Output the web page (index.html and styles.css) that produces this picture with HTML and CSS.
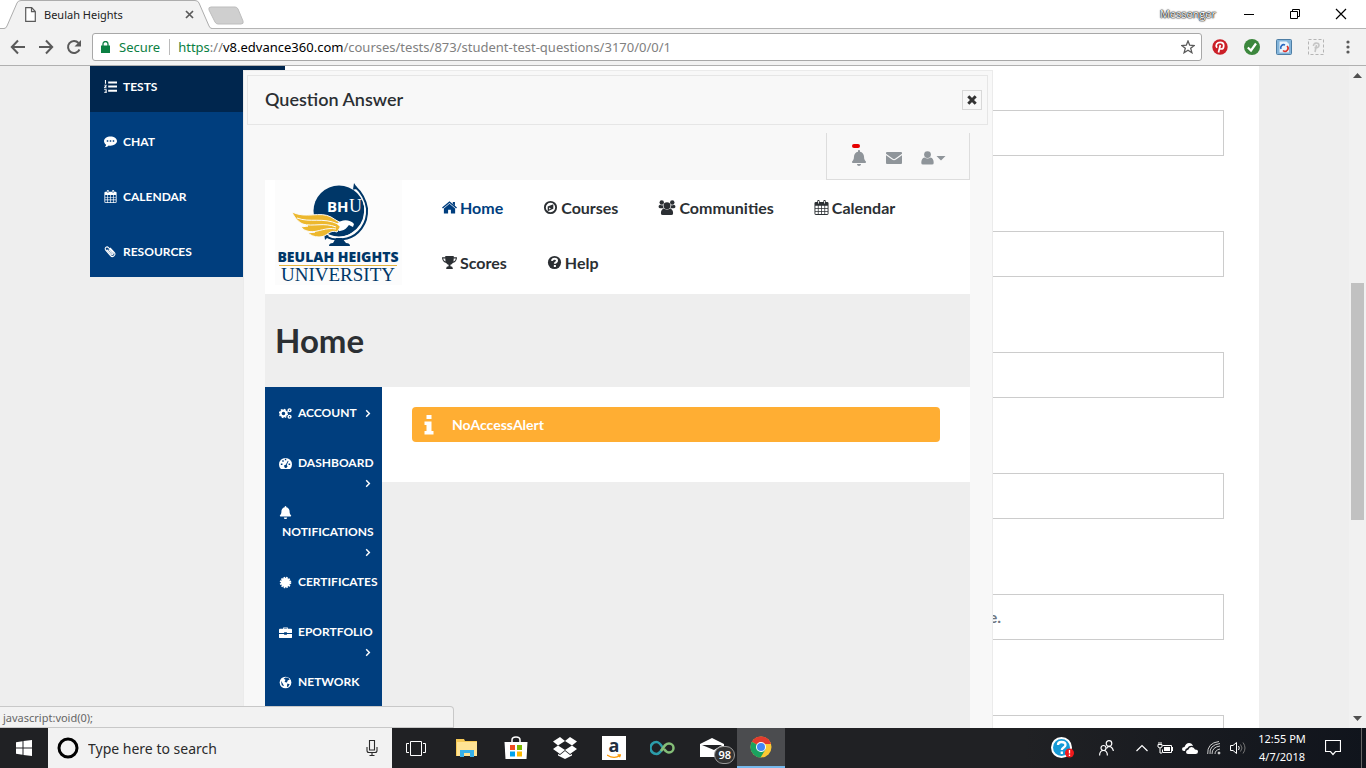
FILE: index.html
```html
<!DOCTYPE html>
<html lang="en">
<head>
    <meta charset="UTF-8">
    <meta name="viewport" content="width=device-width, initial-scale=1.0">
    <title>Beulah Heights</title>
    <link rel="stylesheet" href="styles.css">
</head>
<body>
    <!-- shared icons -->
    <svg class="sprite" aria-hidden="true">
        <symbol id="i-bell" viewBox="0 0 448 512"><path d="M224 512c35.32 0 63.97-28.65 63.97-64H160.03c0 35.35 28.65 64 63.97 64zm215.39-149.71c-19.32-20.76-55.47-51.99-55.47-154.29 0-77.7-54.48-139.9-127.94-155.16V32c0-17.67-14.32-32-31.98-32s-31.98 14.33-31.98 32v20.84C118.56 68.1 64.08 130.3 64.08 208c0 102.3-36.15 133.53-55.47 154.29-6 6.45-8.66 14.16-8.61 21.71.11 16.4 12.98 32 32.1 32h383.8c19.12 0 32-15.6 32.1-32 .05-7.55-2.61-15.27-8.61-21.71z"/></symbol>
        <symbol id="i-calendar" viewBox="0 0 16 16"><path fill-rule="evenodd" d="M2 2h1.500V1a1 1 0 0 1 1-1h.5a1 1 0 0 1 1 1v1h4V1a1 1 0 0 1 1-1h.5a1 1 0 0 1 1 1v1H14a1.500 1.500 0 0 1 1.500 1.500v11A1.500 1.500 0 0 1 14 16H2a1.500 1.500 0 0 1-1.500-1.500v-11A1.500 1.500 0 0 1 2 2zM4.400 1v2.800h.9V1zm6.300 0v2.800h.9V1zM1.500 6v2.500h2.600V6zm3.400 0v2.500h2.700V6zm3.500 0v2.500h2.700V6zm3.500 0v2.500h2.600V6zM1.500 9.300v2.400h2.600V9.300zm3.400 0v2.400h2.700V9.300zm3.500 0v2.400h2.700V9.300zm3.500 0v2.400h2.600V9.300zM1.500 12.500V15h2.600v-2.500zm3.400 0V15h2.700v-2.500zm3.500 0V15h2.700v-2.500zm3.500 0V15h2.600v-2.500z"/></symbol>
        <symbol id="i-chevron" viewBox="0 0 6 10"><path d="M1 1.500 4.500 5 1 8.500" fill="none" stroke="currentColor" stroke-width="1.600"/></symbol>
    </svg>

    <header class="tabstrip">
        <div class="tab">
            <svg class="tab-shape" viewBox="0 0 212 29" aria-hidden="true"><path d="M0 28.500H4Q6 28.500 7 26L17 3Q18 .5 21 .5H195Q198 .5 199 3L209 26Q210 28.500 212 28.500V29H0z" fill="#f2f2f2"/><path d="M0 28.500H4Q6 28.500 7 26L17 3Q18 .5 21 .5H195Q198 .5 199 3L209 26Q210 28.500 212 28.500" fill="none" stroke="#adadad"/></svg>
            <svg class="file-icon" width="11" height="15" viewBox="0 0 11 15" aria-hidden="true"><path d="M.7.7h6L10.300 4.500v9.800H.7zM6.500.7v4h3.800" fill="#fff" stroke="#5a5a5a" stroke-width="1.200"/></svg>
            <span class="tab-title">Beulah Heights</span>
            <button class="bare tab-close" aria-label="Close tab"><svg width="9" height="9" viewBox="0 0 9 9"><path d="M1 1l7 7M8 1L1 8" stroke="#5a5a5a" stroke-width="1.700"/></svg></button>
        </div>
        <button class="bare new-tab" aria-label="New tab"><svg width="36" height="19" viewBox="0 0 36 19"><path d="M3 1h24q2 0 3 2l5 12q1 3-2 3H10q-2 0-3-2L1 4Q0 1 3 1z" fill="#cfcfcf" stroke="#bdbdbd"/></svg></button>
        <div class="window-buttons">
            <span class="messenger">Messenger</span>
            <button class="bare" aria-label="Minimize"><svg width="12" height="12" viewBox="0 0 12 12"><path d="M1 6.500h10" stroke="#000"/></svg></button>
            <button class="bare" aria-label="Restore"><svg width="12" height="12" viewBox="0 0 12 12"><path d="M1.500 3.500h7v7h-7zM3.500 3V1.500h7v7H9" fill="none" stroke="#000"/></svg></button>
            <button class="bare" aria-label="Close"><svg width="12" height="12" viewBox="0 0 12 12"><path d="M1 1l10 10M11 1L1 11" stroke="#000" stroke-width="1.200"/></svg></button>
        </div>
    </header>

    <div class="toolbar">
        <div class="nav-buttons">
            <button class="bare" aria-label="Back"><svg width="16" height="16" viewBox="0 0 16 16"><path d="M15 8H2M8 1.500 1.800 8 8 14.500" fill="none" stroke="#5a5a5a" stroke-width="2"/></svg></button>
            <button class="bare" aria-label="Forward"><svg width="16" height="16" viewBox="0 0 16 16"><path d="M1 8h13M8 1.500 14.200 8 8 14.500" fill="none" stroke="#5a5a5a" stroke-width="2"/></svg></button>
            <button class="bare" aria-label="Reload"><svg width="16" height="16" viewBox="0 0 16 16"><path d="M13.500 10.500A6 6 0 1 1 12.500 4" fill="none" stroke="#5a5a5a" stroke-width="2"/><path d="M15 1v6.500H8.500z" fill="#5a5a5a"/></svg></button>
        </div>
        <div class="omnibox">
            <svg width="9" height="12" viewBox="0 0 9 12" aria-hidden="true"><path d="M0 4.500h9V12H0z" fill="#0b8043"/><path d="M2 5V3a2.500 2.500 0 0 1 5 0v2" fill="none" stroke="#0b8043" stroke-width="1.300"/></svg>
            <span class="secure">Secure</span>
            <div class="url" role="textbox" aria-label="Address"><span class="scheme">https</span>://<span class="host">v8.edvance360.com</span>/courses/tests/873/student-test-questions/3170/0/0/1</div>
            <button class="bare" aria-label="Bookmark"><svg width="14" height="14" viewBox="0 0 14 14"><path d="M7 1l1.700 4.200 4.500.3-3.500 2.800 1.200 4.400L7 10.200l-3.900 2.500 1.200-4.400L.8 5.500l4.500-.3z" fill="none" stroke="#5a5a5a" stroke-width="1.300"/></svg></button>
        </div>
        <div class="extensions">
            <button class="bare" aria-label="Pinterest"><svg width="16" height="16" viewBox="0 0 16 16"><circle cx="8" cy="8" r="7.700" fill="#cb1f27"/><path d="M6.500 13.500 8.300 6M5 8.800C3 6 5 3.300 8.200 3.300c5 0 4.200 6.700.8 6.700-1 0-1.500-.6-1.600-1" fill="none" stroke="#fff" stroke-width="1.700"/></svg></button>
            <button class="bare" aria-label="Safe site"><svg width="16" height="16" viewBox="0 0 16 16"><circle cx="8" cy="8" r="8" fill="#3c873d"/><path d="M3.800 8.500 7 11.500 12 4.500" fill="none" stroke="#fff" stroke-width="2.200"/></svg></button>
            <button class="bare" aria-label="Reload extension"><svg width="16" height="16" viewBox="0 0 16 16"><rect x=".5" y=".5" width="15" height="15" rx="1" fill="#84b5db" stroke="#4e7ea5"/><path d="M3.500 2.500h7l2.500 2.500v8.500H3.500z" fill="#e9f3fb"/><path d="M5 10a3 3 0 0 1 4-4" fill="none" stroke="#2868c0" stroke-width="1.600"/><path d="M11 7a3 3 0 0 1-4 4.500" fill="none" stroke="#dc342c" stroke-width="1.600"/></svg></button>
            <button class="bare" aria-label="Disabled extension"><svg width="16" height="16" viewBox="0 0 16 16"><rect x=".5" y=".5" width="15" height="15" fill="none" stroke="#b5b5b5" stroke-dasharray="3 2"/><path d="M7 13 8.500 6M5.500 7C5 3.500 11 3 11 6.200c0 2.300-2.500 3-4.500 2.300" fill="none" stroke="#c4c4c4" stroke-width="1.600"/></svg></button>
            <button class="bare" aria-label="Menu"><svg width="16" height="16" viewBox="0 0 16 16" fill="#5a5a5a"><circle cx="8" cy="3" r="1.600"/><circle cx="8" cy="8" r="1.600"/><circle cx="8" cy="13" r="1.600"/></svg></button>
        </div>
    </div>

    <div class="viewport">
        <div class="page">
            <div class="container">
                <nav class="course-nav">
                    <a class="active" href="#"><svg viewBox="0 0 14 14"><path d="M4.500 1.500H14v2.200H4.500zm0 4.500H14v2.200H4.500zm0 4.500H14v2.200H4.500zM1 0h1.200v4H1zM.3 5.200h2.500v1.500L1.500 8h1.400v.9H.1v-1L1.800 6H.3zM.2 10h2.700v4H.2v-.9h1.700v-.7H.8v-.8h1.100v-.7H.2z"/></svg>Tests</a>
                    <a href="#"><svg viewBox="0 0 14 14"><path fill-rule="evenodd" d="M7 1.500c3.800 0 7 2.200 7 5s-3.200 5-7 5c-.7 0-1.400-.1-2-.2C4 12.300 2.500 13 1 13c.8-.8 1.200-1.600 1.300-2.500C.8 9.500 0 8 0 6.500c0-2.800 3.200-5 7-5zM3 5.700v1.600h1.600V5.700zm3.200 0v1.600h1.600V5.700zm3.200 0v1.600H11V5.700z"/></svg>Chat</a>
                    <a href="#"><svg><use href="#i-calendar"/></svg>Calendar</a>
                    <a href="#"><svg viewBox="0 0 14 14"><path d="M3 5 7.500 10a1.400 1.400 0 0 0 2-2L4.800 2.800A2 2 0 0 0 1.800 5.500L7 11.500a2.600 2.600 0 0 0 4-3.500L6.500 3M5 5l4 4.500" fill="none" stroke="#fff" stroke-width="1.100"/></svg>Resources</a>
                </nav>
                <form class="answers">
                    <input type="text" aria-label="Answer 1">
                    <input type="text" aria-label="Answer 2">
                    <input type="text" aria-label="Answer 3">
                    <input type="text" aria-label="Answer 4">
                    <input type="text" aria-label="Answer 5" value="e.">
                    <input type="text" aria-label="Answer 6">
                </form>
            </div>

            <section class="modal" role="dialog" aria-labelledby="modal-title">
                <div class="modal-header">
                    <h2 id="modal-title">Question Answer</h2>
                    <button class="modal-close" aria-label="Close dialog"><svg width="10" height="10" viewBox="0 0 10 10"><path d="M1.300 1.300l7.400 7.400M8.700 1.300 1.300 8.700" stroke="#333" stroke-width="3"/></svg></button>
                </div>
                <div class="frame">
                    <div class="user-bar">
                        <button class="bare alerts" aria-label="Notifications"><span class="dot"></span><svg width="14" height="16"><use href="#i-bell"/></svg></button>
                        <button class="bare" aria-label="Messages"><svg width="16" height="12" viewBox="0 0 16 12"><path d="M1 0h14a1 1 0 0 1 1 1v.8L9 6.800q-1 .7-2 0L0 1.800V1a1 1 0 0 1 1-1zM0 3.200l6 4.400q2 1.400 4 0l6-4.400V11a1 1 0 0 1-1 1H1a1 1 0 0 1-1-1z"/></svg></button>
                        <button class="bare" aria-label="Profile"><svg width="25" height="14" viewBox="0 0 25 14"><circle cx="5.500" cy="3.600" r="3.400"/><path d="M2.500 6.500q3 2.200 6 0 3.200.5 3.200 5.500 0 1.500-1.700 1.500H1Q-.7 13.500-.7 12q0-5 3.200-5.500zM14.500 5h9L19 9.500z"/></svg></button>
                    </div>
                    <div class="masthead">
                        <a class="logo" href="#" aria-label="Beulah Heights University">
                            <svg width="127" height="105" viewBox="0 0 127 105">
                                <path d="M0 0h127v105H0z" fill="#fcfcfc"/>
                                <circle cx="64" cy="31" r="25.500" fill="#003768"/>
                                <path d="M81 8a29 29 0 0 1-4 47Q66 62 52 57" fill="none" stroke="#fcfcfc" stroke-width="4"/>
                                <path d="M80 6.500q10 9 12 22c1 16-9 27-20 30q-12 3-21-2" fill="none" stroke="#003768" stroke-width="2"/>
                                <path d="M79 3l4 6-5 .5zM49 53l1 7 4-4zM61 58h6l4 5q4 0 4 3H54q0-3 4-3z" fill="#003768"/>
                                <path d="M17 32c14 7 28-1 39 5 5 3 7 5 12 6l-6 9c-8-3-9 5-18 5-5 0-9-2-11-4l7-1c-7 0-12-2-14-5l7-1c-8-2-13-7-16-14z" fill="#edb82e" stroke="#fcfcfc"/>
                                <path d="M22 38c13 5 26-1 41 6M27 44c12 3 22-2 34 3M34 52c10 0 17-5 27-3" fill="none" stroke="#fcfcfc"/>
                                <path d="M62 44c4-5 13-5 17 0l-1 3-4-2c-2 2-3 5-9 6-2 1-1-3 0-4z" fill="#fff"/>
                                <text class="logo-bh" x="52" y="32">BH</text>
                                <text class="logo-u" x="74" y="32">U</text>
                                <text class="logo-name" x="63" y="82">BEULAH HEIGHTS</text>
                                <path d="M4 85.500h118" stroke="#e3b23c"/>
                                <text class="logo-university" x="63" y="101">UNIVERSITY</text>
                            </svg>
                        </a>
                        <nav class="main-nav">
                            <a class="current" href="#"><svg viewBox="0 0 16 16"><path d="M8 4 14 9v5.500h-4.500v-4h-3v4H2V9zM8 1.200 16 8l-1 1.100L8 3.200 1 9.100 0 8zM11.500 2h2.300v4l-2.300-2z"/></svg>Home</a>
                            <a href="#"><svg viewBox="0 0 16 16"><path fill-rule="evenodd" d="M8 1a7 7 0 1 1 0 14A7 7 0 0 1 8 1zm0 2a5 5 0 1 0 0 10A5 5 0 0 0 8 3zm3 1.500v4.800l-6 2.700V7zM6.500 8v2l2-1z"/></svg>Courses</a>
                            <a href="#"><svg class="wide" viewBox="0 0 18 16"><circle cx="9" cy="6" r="3.700"/><circle cx="3.400" cy="2.700" r="2.400"/><circle cx="14.600" cy="2.700" r="2.400"/><path d="M5.500 9q3.500 2.400 7 0 3 1 3 5 0 2-2 2h-9q-2 0-2-2 0-4 3-5zM1.500 5q2 1 3 .5 0 2 1 3.200H1.500Q0 8.700 0 7q0-1.500 1.500-2zM16.500 5q-2 1-3 .5 0 2-1 3.200h4q1.500 0 1.500-1.700 0-1.500-1.500-2z"/></svg>Communities</a>
                            <a href="#"><svg><use href="#i-calendar"/></svg>Calendar</a>
                            <a href="#"><svg viewBox="0 0 16 16"><path fill-rule="evenodd" d="M3.500 1h9v1.500H16q0 5-4.500 6-1 1.500-2.500 2v1.500q2.500.2 2.500 2v1h-7v-1q0-1.800 2.500-2v-1.500q-1.500-.5-2.500-2Q0 7.500 0 2.500h3.500zM1.200 3.600Q1.500 6 3.900 7q-.4-1.500-.4-3.400zm11.300 0q0 1.900-.4 3.400 2.400-1 2.700-3.400z"/></svg>Scores</a>
                            <a href="#"><svg viewBox="0 0 16 16"><circle cx="8" cy="8" r="7"/><path d="M5.300 6.300Q5.700 4 8 4q2.700 0 2.700 2.100c0 1.700-2.300 1.600-2.300 3.200M8.400 10.700v2.200" fill="none" stroke="#fff" stroke-width="2.200"/></svg>Help</a>
                        </nav>
                    </div>
                    <h1>Home</h1>
                    <div class="frame-body">
                        <nav class="side-nav">
                            <a href="#"><svg class="icon" viewBox="0 0 16 14"><circle cx="5.500" cy="7" r="3.500" fill="none" stroke="#fff" stroke-width="2.600"/><circle cx="5.500" cy="7" r="5" fill="none" stroke="#fff" stroke-width="1.500" stroke-dasharray="2 1.930"/><circle cx="13" cy="3" r="1.700" fill="none" stroke="#fff" stroke-width="1.800"/><circle cx="13" cy="11" r="1.700" fill="none" stroke="#fff" stroke-width="1.800"/></svg><span>Account</span><svg class="more"><use href="#i-chevron"/></svg></a>
                            <a href="#"><svg class="icon" viewBox="0 0 14 14"><path fill-rule="evenodd" d="M2 13Q0 11 0 8a7 7 0 0 1 14 0q0 3-2 5zM2 7v1.700h1.700V7zm1.500-3.500v1.600h1.600V3.500zM6.300 2v1.600h1.500V2zM9.500 4 7.300 8.300a1.700 1.700 0 1 0 1 .3l2-4.300zm.8 3v1.700H12V7z"/></svg><span>Dashboard</span><svg class="more"><use href="#i-chevron"/></svg></a>
                            <a href="#"><svg class="icon"><use href="#i-bell"/></svg><span>Notifications</span><svg class="more"><use href="#i-chevron"/></svg></a>
                            <a href="#"><svg class="icon" viewBox="0 0 14 14"><circle cx="7" cy="7" r="5"/><circle cx="7" cy="7" r="5" fill="none" stroke="#fff" stroke-width="2.400" stroke-dasharray="1.600 1.018"/></svg><span>Certificates</span></a>
                            <a href="#"><svg class="icon" viewBox="0 0 14 14"><path fill-rule="evenodd" d="M4.500 3V1.500h5V3H13a1 1 0 0 1 1 1v3.500H8.500v-.7h-3v.7H0V4a1 1 0 0 1 1-1zm1-.6V3h3v-.6zM0 8.500h5.500v1h3v-1H14V12a1 1 0 0 1-1 1H1a1 1 0 0 1-1-1z"/></svg><span>Eportfolio</span><svg class="more"><use href="#i-chevron"/></svg></a>
                            <a href="#"><svg class="icon" viewBox="0 0 14 14"><circle cx="7" cy="7" r="6.300"/><path d="M7 1.500 10 2l1.500 2-2 .5L8.500 7 6 6.500 7 4 5 3zM9 8l2.500 1-2 3-1-1zM2 5l2 3 1.500 3L3 10z" fill="#003e7e"/></svg><span>Network</span></a>
                        </nav>
                        <div class="frame-content">
                            <p class="alert" role="alert"><svg width="10" height="20" viewBox="0 0 10 20"><path d="M2.500 0h5v4h-5zM.5 6.500h7V16h2v3.500H.5V16h2v-6h-2z" fill="#fff"/></svg>NoAccessAlert</p>
                        </div>
                    </div>
                </div>
            </section>
        </div>
        <div class="scrollbar" aria-hidden="true">
            <svg width="9" height="5" viewBox="0 0 9 5"><path d="M0 5 4.500 0 9 5z" fill="#505050"/></svg>
            <div class="track"><div class="thumb"></div></div>
            <svg width="9" height="5" viewBox="0 0 9 5"><path d="M0 0h9L4.500 5z" fill="#505050"/></svg>
        </div>
        <div class="status-bubble">javascript:void(0);</div>
    </div>

    <footer class="taskbar">
        <button class="bare start" aria-label="Start"><svg width="16" height="16" viewBox="0 0 16 16" fill="#fff"><path d="M0 2.200 6.500 1.300v6.200H0zM7.500 1.100 16 0v7.500H7.500zM0 8.500h6.500v6.200L0 13.800zM7.500 8.500H16V16l-8.500-1.100z"/></svg></button>
        <label class="search">
            <svg width="22" height="22" viewBox="0 0 22 22"><circle cx="11" cy="11" r="9" fill="none" stroke="#000" stroke-width="3"/></svg>
            <input type="text" placeholder="Type here to search" aria-label="Search">
            <svg width="12" height="16" viewBox="0 0 12 16"><path d="M3.500.5h5v9.500h-5zM1 7v3.500Q1 12.500 3 12.500h6q2 0 2-2V7M6 12.500v3M3.500 15.500h5" fill="none" stroke="#2b2b2b" stroke-width="1.100"/></svg>
        </label>
        <button class="bare task-view" aria-label="Task view"><svg width="20" height="15" viewBox="0 0 20 15"><path d="M4.500.5h11v14h-11zM3 2.500H.5v9H3M17 2.500h2.500v9H17" fill="none" stroke="#fff"/></svg></button>
        <div class="apps">
            <button class="bare" aria-label="File Explorer"><svg width="22" height="20" viewBox="0 0 22 20"><path d="M0 1h8l1 2h12v15H0z" fill="#f6c956"/><path d="M1 4h20v14H1z" fill="#ffe394"/><path d="M4 12h14v7h-4v-4H8v4H4z" fill="#38b1e8"/></svg></button>
            <button class="bare" aria-label="Store"><svg width="24" height="24" viewBox="0 0 24 24"><path d="M8 7V4q0-3 4-3t4 3v3" fill="none" stroke="#fff" stroke-width="1.500"/><path d="M.5 6h23l-1 17h-21z" fill="#fff"/><path d="M6 9h5v5H6z" fill="#f04e24"/><path d="M13 9h5v5h-5z" fill="#7db900"/><path d="M6 15.500h5v5H6z" fill="#00a2ec"/><path d="M13 15.500h5v5h-5z" fill="#fdb900"/></svg></button>
            <button class="bare" aria-label="Dropbox"><svg width="24" height="22" viewBox="0 0 24 22" fill="#fff"><path d="M7 0l5 4-7 4.500L0 4.500zM17 0l7 4.500-5 4L12 4zM0 12l5-3.500 7 4.500-5 4zM24 12l-5-3.500-7 4.500 5 4zM12 14l5 4 2-1v1.500L12 22l-7-3.500V17l2 1z"/></svg></button>
            <button class="bare" aria-label="Amazon"><span class="amazon">a<svg width="14" height="6" viewBox="0 0 14 6"><path d="M0 1q7 4.500 13 .5M10.500.8h3l-1 2.500" fill="none" stroke="#f90" stroke-width="1.300"/></svg></span></button>
            <button class="bare" aria-label="Infinity"><svg width="26" height="16" viewBox="0 0 26 16"><path d="M13 8C10 3 8 2 6.500 2a6 6 0 0 0 0 12C8.500 14 10 13 13 8" fill="none" stroke="#2c9dab" stroke-width="2.500"/><path d="M11 11c4-6 5-7.500 8-7.500a4.500 4.500 0 0 1 0 9c-2.500 0-3.500-1.500-5-3.500" fill="none" stroke="#85bf78" stroke-width="2.500"/></svg></button>
            <button class="bare mail" aria-label="Mail"><svg width="24" height="20" viewBox="0 0 24 20"><path d="M0 6 12 0l12 6v13H0z" fill="#fff"/><path d="M2 7h20l-8 5z" fill="#202124"/></svg><span class="badge">98</span></button>
            <button class="bare open" aria-label="Chrome"><svg width="22" height="22" viewBox="0 0 22 22"><circle cx="11" cy="11" r="10.500" fill="#fcc934"/><path d="M11 11 1.900 5.700A10.500 10.500 0 0 1 20.100 5.700L21 8H11z" fill="#e33b2e"/><path d="M1.900 5.700A10.500 10.500 0 0 0 10.500 21.500l5-8-4.500-2.500z" fill="#1aa260"/><circle cx="11" cy="11" r="5" fill="#fff"/><circle cx="11" cy="11" r="4" fill="#4386f5"/></svg></button>
        </div>
        <div class="tray">
            <button class="bare help" aria-label="Support"><svg width="23" height="22" viewBox="0 0 23 22"><circle cx="10.500" cy="10.500" r="9.500" fill="#169ad6" stroke="#fff" stroke-width="2"/><path d="M7 8Q7 5 10.500 5q4 0 4 3c0 2.500-3.700 2.500-3.700 5M10.800 14.500V17" fill="none" stroke="#fff" stroke-width="2.300"/><circle cx="18.500" cy="16" r="4.500" fill="#f0191b"/><path d="M18.500 13v3.500M18.500 17.500V19" stroke="#fff" stroke-width="1.300"/></svg></button>
            <button class="bare people" aria-label="People"><svg width="15" height="16" viewBox="0 0 15 16" fill="none" stroke="#fff" stroke-width="1.200"><circle cx="10" cy="3.500" r="2.800"/><circle cx="4.500" cy="8" r="2.500"/><path d="M.6 15.500Q.6 10.500 4.500 10.500T8.400 15.500M7.500 8.500Q8.500 6.300 10 6.300 13.500 6.500 14.400 11"/></svg></button>
            <button class="bare" aria-label="Show hidden icons"><svg width="12" height="8" viewBox="0 0 12 8"><path d="M.5 7 6 1.500 11.500 7" fill="none" stroke="#fff" stroke-width="1.200"/></svg></button>
            <button class="bare" aria-label="Battery"><svg width="16" height="12" viewBox="0 0 16 12"><path d="M5.500 3.500h9v7h-9v-3M1 2.500h4V5Q3 7 1 5zM2 0v2M4 0v2M3 6v5h2" fill="none" stroke="#fff"/><path d="M7 5h6v4H7zM15 5h1v4h-1z" fill="#fff"/></svg></button>
            <button class="bare" aria-label="OneDrive"><svg width="16" height="11" viewBox="0 0 16 11"><path d="M3 8H2Q0 8 0 6t2.500-2Q4 0 7 0t4 3Q7 2 5.500 5 3 5.500 3 8z" fill="#fff"/><path d="M6 11q-2 0-2-2t2.500-2.500Q7 4 9.500 4t3.500 2.500q3 0 3 2.200T13.500 11z" fill="#fff"/></svg></button>
            <button class="bare" aria-label="Wi-Fi"><svg width="14" height="14" viewBox="0 0 14 14" fill="none" stroke="#ccc"><circle cx="12" cy="12" r="1" fill="#fff"/><path d="M8 13q0-4 5-5M5 13q0-7 8-8M3 13Q2 4 13 2.500M.7 13Q0 2 12 .5"/></svg></button>
            <button class="bare" aria-label="Volume"><svg width="16" height="14" viewBox="0 0 16 14" fill="none" stroke="#fff"><path d="M.5 4.500H3L6.500 1.500v11L3 9.500H.5z"/><path d="M8.500 5q1.500 2 0 4"/><path d="M10.500 3.500q3 3.500 0 7M13 1.500q4 5.500 0 11" stroke="#777"/></svg></button>
            <time class="clock"><span>12:55 PM</span><span>4/7/2018</span></time>
            <button class="bare action-center" aria-label="Action center"><svg width="16" height="16" viewBox="0 0 16 16"><path d="M.5.5h15v11h-5L8 14.500 5.500 11.500h-5z" fill="none" stroke="#fff" stroke-width="1.200"/></svg></button>
        </div>
    </footer>
</body>
</html>
```
FILE: styles.css
```css
* {
    box-sizing: border-box;
}

body {
    margin: 0;
    height: 100vh;
    display: flex;
    flex-direction: column;
    overflow: hidden;
    font-family: "Noto Sans", "Open Sans", sans-serif;
    font-size: 12px;
    color: #333;
}

a {
    text-decoration: none;
}

.sprite {
    display: none;
}

svg {
    flex: none;
    display: block;
}

.bare {
    display: flex;
    align-items: center;
    justify-content: center;
    padding: 0;
    border: 0;
    background: none;
}

/* browser tabs */
.tabstrip {
    flex: none;
    display: flex;
    height: 29px;
    background: #fff;
    box-shadow: inset 0 -1px #b4b4b4;
}

.tab {
    position: relative;
    display: flex;
    align-items: center;
    width: 212px;
    padding: 0 18px 0 25px;
}

.tab-shape {
    position: absolute;
    inset: 0;
}

.file-icon,
.tab-title,
.tab-close {
    position: relative;
}

.tab-title {
    flex: 1;
    margin-left: 8px;
    font-size: 11px;
    color: #222;
}

.new-tab {
    margin: 6px 0 4px -4px;
}

.window-buttons {
    display: flex;
    align-items: center;
    gap: 34px;
    margin-left: auto;
    padding: 0 19px 2px 0;
}

.messenger {
    margin-right: -7px;
    font: 11px "Open Sans", sans-serif;
    color: #fff;
    text-shadow: 0 0 1px #000, 0 0 1px #000, 0 0 2px #000;
}

.toolbar {
    flex: none;
    display: flex;
    align-items: center;
    height: 37px;
    padding: 0 10px;
    background: #f2f2f2;
    border-bottom: 1px solid #b0b0b0;
}

.nav-buttons {
    display: flex;
    gap: 12px;
    margin-right: 10px;
}

.omnibox {
    flex: 1;
    display: flex;
    align-items: center;
    height: 28px;
    padding: 0 6px 0 8px;
    background: #fff;
    border: 1px solid #a8a8a8;
    border-radius: 3px;
    font-size: 13px;
}

.secure {
    margin: 0 9px;
    color: #0b8043;
}

.url {
    flex: 1;
    padding-left: 8px;
    border-left: 1px solid #bbb;
    line-height: 16px;
    color: #808080;
}

.scheme {
    color: #0b8043;
}

.host {
    color: #000;
}

.extensions {
    display: flex;
    gap: 16px;
    margin-left: 10px;
}

/* page */
.viewport {
    position: relative;
    flex: 1;
    min-height: 0;
    display: flex;
    overflow: hidden;
}

.page {
    position: relative;
    flex: 1;
    overflow: hidden;
    padding: 0 90px;
    background: #eee;
    font-family: Lato, sans-serif;
}

.container {
    display: flex;
    align-items: flex-start;
    background: #fff;
    box-shadow: inset 195px 0 #eee;
}

.course-nav {
    width: 195px;
    background: #003e7e;
    color: #fff;
    /* page is scrolled part way into the first item */
    margin-top: -9px;
}

.course-nav a {
    display: flex;
    align-items: center;
    gap: 6px;
    height: 55px;
    padding: 3px 14px 0;
    color: #fff;
    font-size: 12px;
    font-weight: 700;
    text-transform: uppercase;
}

.course-nav a.active {
    background: #00264e;
}

.course-nav svg {
    width: 13px;
    height: 13px;
    fill: #fff;
}

.answers {
    flex: 1;
    display: flex;
    flex-direction: column;
    gap: 75px;
    padding: 44px 35px;
}

.answers input {
    height: 46px;
    padding: 0 222px 2px 15px;
    border: 1px solid #ccc;
    background: #fff;
    color: #6f7680;
    font: 700 16px Lato, sans-serif;
    text-align: right;
}

/* dialog */
.modal {
    position: absolute;
    top: 4px;
    bottom: 0;
    left: 243px;
    width: 750px;
    padding: 4px 4px 0 3px;
    background: #f8f8f8;
    border: 1px solid #ebebeb;
    border-bottom: 0;
    overflow: hidden;
}

.modal-header {
    display: flex;
    align-items: center;
    justify-content: space-between;
    height: 50px;
    padding: 0 5px 0 17px;
    border: 1px solid #e6e6e6;
}

.modal-header h2 {
    margin: 0;
    padding-bottom: 3px;
    font-size: 18px;
    font-weight: 600;
    color: #2b2f33;
}

.modal-close {
    display: flex;
    align-items: center;
    justify-content: center;
    width: 20px;
    height: 20px;
    padding: 0;
    border: 1px solid #d8d8d8;
    background: #f8f8f8;
}

.frame {
    margin: 8px 18px 0;
    color: #2b2f33;
}

.user-bar {
    display: flex;
    align-items: center;
    gap: 20px;
    width: 144px;
    height: 47px;
    margin-left: auto;
    padding: 3px 24px 0 25px;
    border: 1px solid #ddd;
    border-top: 0;
}

.user-bar svg {
    overflow: visible;
    fill: #8f959a;
}

.alerts {
    position: relative;
}

.dot {
    position: absolute;
    top: -6px;
    left: 0;
    width: 8px;
    height: 4px;
    border-radius: 2px;
    background: #e60000;
}

.masthead {
    display: flex;
    align-items: flex-start;
    padding: 0 10px 4px;
    background: #fff;
}

.main-nav {
    display: flex;
    flex-wrap: wrap;
    column-gap: 40px;
    padding-left: 40px;
}

.main-nav a {
    display: flex;
    align-items: center;
    gap: 3px;
    height: 55px;
    font-size: 16px;
    font-weight: 700;
    color: #2b2f33;
    fill: #2b2f33;
}

.main-nav a.current {
    color: #003e7e;
    fill: #003e7e;
}

.main-nav svg {
    width: 15px;
    height: 15px;
}

.main-nav .wide {
    width: 18px;
}

.logo text {
    font-family: "Open Sans", sans-serif;
    font-weight: 800;
    fill: #003768;
}

.logo .logo-bh {
    font-size: 15px;
    font-weight: 700;
    fill: #fff;
}

.logo .logo-u {
    font-family: "Liberation Serif", serif;
    font-size: 18px;
    font-weight: 400;
    fill: #fff;
}

.logo .logo-name {
    font-size: 14px;
    text-anchor: middle;
}

.logo .logo-university {
    font-family: "Liberation Serif", serif;
    font-size: 19px;
    font-weight: 400;
    text-anchor: middle;
}

.frame h1 {
    margin: 0;
    padding: 26px 10px;
    background: #eee;
    font-size: 33px;
    font-weight: 700;
    line-height: 41px;
}

.frame-body {
    display: flex;
    align-items: flex-start;
    background: #eee;
}

.side-nav {
    width: 117px;
    padding: 6px 0 40px 14px;
    background: #003e7e;
}

.side-nav a {
    display: flex;
    flex-wrap: wrap;
    align-content: flex-start;
    align-items: center;
    min-height: 50px;
    padding-top: 10px;
    color: #fff;
    fill: #fff;
    font-size: 12px;
    font-weight: 700;
    line-height: 20px;
    text-transform: uppercase;
}

.side-nav .icon {
    width: 13px;
    height: 13px;
    margin: 3px 3px 3px 0;
}

.side-nav span {
    margin-left: 3px;
}

.side-nav .more {
    width: 6px;
    height: 9px;
    margin: 6px 11px 5px auto;
    color: #fff;
}

.frame-content {
    flex: 1;
    padding: 20px 30px 40px;
    background: #fff;
}

.alert {
    display: flex;
    align-items: center;
    gap: 18px;
    height: 35px;
    margin: 0;
    padding: 0 12px;
    border-radius: 4px;
    background: #ffae33;
    color: #fff;
    font-size: 14px;
    font-weight: 700;
}

.scrollbar {
    display: flex;
    flex-direction: column;
    align-items: center;
    width: 17px;
    padding: 7px 0;
    background: #f1f1f1;
}

.track {
    flex: 1;
    width: 13px;
    padding-top: 205px;
}

.thumb {
    height: 237px;
    background: #c1c1c1;
}

.status-bubble {
    position: absolute;
    bottom: 0;
    left: 0;
    width: 454px;
    height: 22px;
    padding-left: 3px;
    border: 1px solid #c8c8c8;
    border-left: 0;
    border-radius: 0 4px 0 0;
    background: #f2f2f2;
    color: #666;
    font-size: 11px;
    line-height: 21px;
}

/* taskbar */
.taskbar {
    flex: none;
    display: flex;
    height: 40px;
    background: linear-gradient(90deg, #202124 75%, #10141c);
    color: #fff;
}

.start,
.task-view {
    width: 48px;
}

.search {
    display: flex;
    align-items: center;
    gap: 9px;
    width: 344px;
    padding: 0 14px 0 9px;
    background: #f2f2f2;
}

.search input {
    flex: 1;
    min-width: 0;
    padding: 0;
    border: 0;
    background: none;
    font: 14px "Noto Sans", sans-serif;
}

.search input::placeholder {
    color: #2b2b2b;
    opacity: 1;
}

.apps {
    display: flex;
    gap: 1px;
    margin-left: 3px;
}

.apps button {
    width: 48px;
}

.apps .open {
    background: #4b4c4f;
    border-bottom: 2px solid #76b9ed;
}

.amazon {
    display: flex;
    flex-direction: column;
    align-items: center;
    width: 24px;
    height: 24px;
    background: #fff;
    color: #222f3e;
    font: 700 18px/18px "Open Sans", sans-serif;
}

.mail {
    position: relative;
}

.badge {
    position: absolute;
    right: 1px;
    bottom: 4px;
    padding: 0 3px;
    border: 1px solid #999;
    border-radius: 9px;
    background: #333;
    color: #fff;
    font: 600 11px/16px "Noto Sans", sans-serif;
}

.tray {
    display: flex;
    align-items: center;
    gap: 9px;
    margin-left: auto;
    padding-right: 4px;
}

.tray .help {
    margin-right: 16px;
}

.tray .people {
    margin-right: 13px;
}

.clock {
    display: flex;
    flex-direction: column;
    align-items: center;
    width: 50px;
    margin-left: 2px;
    font-size: 11px;
    line-height: 18px;
    white-space: nowrap;
}

.action-center {
    align-self: stretch;
    width: 46px;
    padding-right: 12px;
    border-right: 1px solid #666;
}
```
